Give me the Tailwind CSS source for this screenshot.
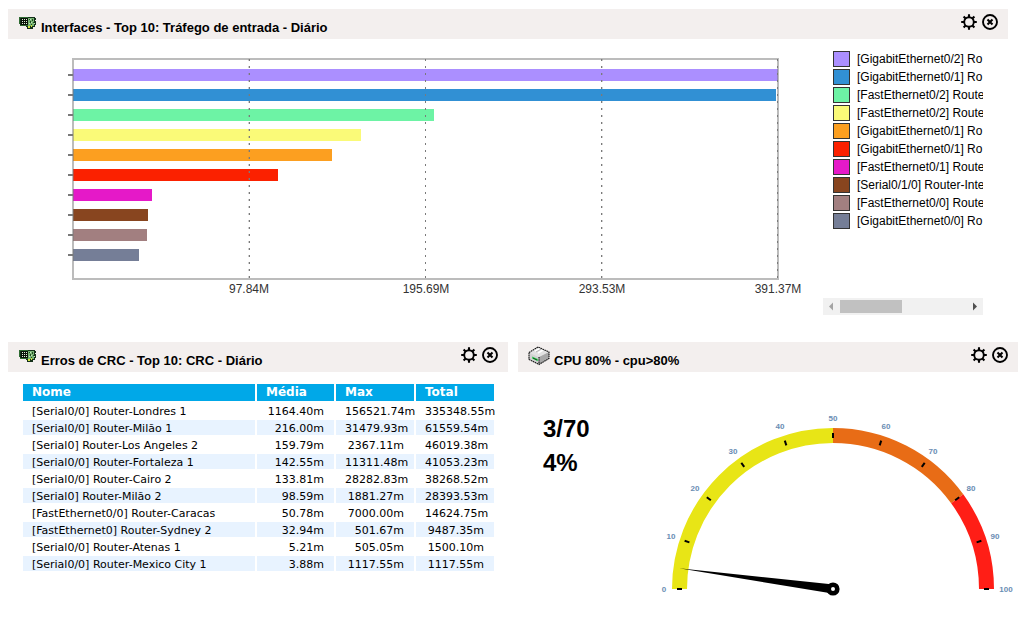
<!DOCTYPE html>
<html lang="pt-BR">
<head>
<meta charset="utf-8">
<meta name="viewport" content="width=device-width, initial-scale=1">
<title>Dashboard</title>
<script src="https://cdn.jsdelivr.net/npm/@tailwindcss/browser@4"></script>
</head>
<body class="bg-white text-black font-['Liberation_Sans',Arial,sans-serif]">
<svg class="hidden" aria-hidden="true">
  <symbol id="gear" viewBox="0 0 16 16">
    <circle cx="8" cy="8" r="4.8" fill="none" stroke="#000" stroke-width="1.9"/>
    <path d="M8 .2v3M8 12.8v3M.2 8h3M12.8 8h3M2.6 2.6l2 2M11.4 11.4l2 2M2.6 13.4l2-2M11.4 4.6l2-2" stroke="#000" stroke-width="2.1" fill="none"/>
  </symbol>
  <symbol id="close" viewBox="0 0 16 16">
    <circle cx="8" cy="8" r="7" fill="none" stroke="#000" stroke-width="1.9"/>
    <path d="M5.500 5.500l5 5M10.500 5.500l-5 5" stroke="#000" stroke-width="2.1" fill="none"/>
  </symbol>
  <symbol id="card" viewBox="0 0 18 13">
    <path d="M0 0h16v1h1v2h-1v1h1v4h-1v2h-2v2H8v-2H7V9H1V7H0z" fill="#14301a"/>
    <path d="M0 0h9v1H0zM0 1h1v6H0zM1 8h8v1H1z" fill="#2f6b33"/>
    <path d="M2 1h7v7H2z" fill="#081208"/>
    <path d="M3 2h1v1H3zM5 2h1v1H5zM7 2h1v1H7zM3 4h1v1H3zM5 4h1v1H5zM7 4h1v1H7zM3 6h1v1H3zM5 6h1v1H5zM7 6h1v1H7z" fill="#dff0d8"/>
    <path d="M9 1h6v8H9z" fill="#77b373"/>
    <path d="M10 2h1v1h-1zM13 2h1v2h-1zM11 4h1v2h-1zM14 5h1v1h-1zM12 7h1v1h-1z" fill="#1f4a22"/>
    <path d="M11 2h1v1h-1zM12 5h1v1h-1zM15 6h1v1h-1zM10 6h1v1h-1z" fill="#c2e8bb"/>
    <path d="M9 9h2v2H9zM12 8h1v2h-1z" fill="#d2e83f"/>
  </symbol>
  <symbol id="drive" viewBox="0 0 22 20">
    <path d="M1 6.500L10 1l11 5v6.500l-10 6-10-5z" fill="#efefef"/>
    <path d="M1 6.500L10 1l11 5-10 5z" fill="#e2e2e2"/>
    <path d="M11 11L21 6v6.500l-10 6z" fill="#a8a8a8"/>
    <path d="M1 6.500L11 11v7.500l-10-5z" fill="#d2d2d2"/>
    <path d="M7 5l5-2.500M10 7l5-3" stroke="#fff" stroke-width="1.500"/>
    <path d="M8 6l5-2.800" stroke="#b5b5b5" stroke-width="1"/>
    <path d="M1 6.500L10 1l11 5v6.500l-10 6-10-5zM11 11v7" fill="none" stroke="#111" stroke-width="1.100" stroke-dasharray="1.600 .6"/>
    <path d="M4 10.500l6 2.600v2.200L4 12.600z" fill="#43d263"/>
    <path d="M5 12l4 2" stroke="#064d14" stroke-width="1"/>
  </symbol>
</svg>

<main class="pl-2 pr-px pt-[9px]">
  <section class="mr-2.5">
    <header class="flex h-[30px] items-start justify-between bg-[#f3efee] px-2.5 pt-[5px]">
      <div class="flex">
        <svg class="mt-[3px] ml-px h-[13px] w-[18px]" shape-rendering="crispEdges"><use href="#card"/></svg>
        <h2 class="ml-1 mt-1.5 text-[13px] leading-4 font-bold">Interfaces - Top 10: Tráfego de entrada - Diário</h2>
      </div>
      <div class="flex gap-[5px]">
        <button type="button" aria-label="Configurar"><svg class="size-4"><use href="#gear"/></svg></button>
        <button type="button" aria-label="Fechar"><svg class="size-4"><use href="#close"/></svg></button>
      </div>
    </header>
    <div class="flex items-start pl-[52px] pr-[25px] pt-3">
      <svg class="mt-[-1px] h-auto min-w-0 flex-1" viewBox="60 50 763 250" font-size="12" fill="#333" role="img" aria-label="Tráfego de entrada por interface">
        <g shape-rendering="crispEdges">
          <rect x="73" y="69" width="705" height="12" fill="#ab8fff"/>
          <rect x="73" y="89" width="703" height="12" fill="#3190d4"/>
          <rect x="73" y="109" width="361" height="12" fill="#6df3a5"/>
          <rect x="73" y="129" width="288" height="12" fill="#fafa78"/>
          <rect x="73" y="149" width="259" height="12" fill="#fc9f20"/>
          <rect x="73" y="169" width="205" height="12" fill="#fb2100"/>
          <rect x="73" y="189" width="79" height="12" fill="#e519c8"/>
          <rect x="73" y="209" width="75" height="12" fill="#88451f"/>
          <rect x="73" y="229" width="74" height="12" fill="#a27f80"/>
          <rect x="73" y="249" width="66" height="12" fill="#757e97"/>
          <rect x="73" y="59" width="705" height="220" fill="none" stroke="#7a7a7a" stroke-opacity=".5" stroke-width="2"/>
          <path d="M68 75h5M68 95h5M68 115h5M68 135h5M68 155h5M68 175h5M68 195h5M68 215h5M68 235h5M68 255h5" stroke="#7a7a7a" stroke-width="2"/>
          <path d="M249.500 59v219M425.500 59v219M601.500 59v219M777.500 59v219" stroke="#7a7a7a" stroke-dasharray="2 5"/>
          <path d="M248.500 59v219M602.500 59v219" stroke="#7a7a7a" stroke-opacity=".35" stroke-dasharray="2 5"/>
        </g>
        <g text-anchor="middle">
          <text x="249" y="293">97.84M</text>
          <text x="426" y="293">195.69M</text>
          <text x="602" y="293">293.53M</text>
          <text x="778" y="293">391.37M</text>
        </g>
      </svg>
      <div class="w-40 shrink-0">
        <ul class="flex h-[247px] flex-col gap-0.5 overflow-hidden pl-2.5 text-xs leading-4 whitespace-nowrap">
          <li class="flex gap-[7px]"><span class="h-4 w-[17px] shrink-0 border border-[#333] bg-[#ab8fff]"></span>[GigabitEthernet0/2] Ro</li>
          <li class="flex gap-[7px]"><span class="h-4 w-[17px] shrink-0 border border-[#333] bg-[#3190d4]"></span>[GigabitEthernet0/1] Ro</li>
          <li class="flex gap-[7px]"><span class="h-4 w-[17px] shrink-0 border border-[#333] bg-[#6df3a5]"></span>[FastEthernet0/2] Route</li>
          <li class="flex gap-[7px]"><span class="h-4 w-[17px] shrink-0 border border-[#333] bg-[#fafa78]"></span>[FastEthernet0/2] Route</li>
          <li class="flex gap-[7px]"><span class="h-4 w-[17px] shrink-0 border border-[#333] bg-[#fc9f20]"></span>[GigabitEthernet0/1] Ro</li>
          <li class="flex gap-[7px]"><span class="h-4 w-[17px] shrink-0 border border-[#333] bg-[#fb2100]"></span>[GigabitEthernet0/1] Ro</li>
          <li class="flex gap-[7px]"><span class="h-4 w-[17px] shrink-0 border border-[#333] bg-[#e519c8]"></span>[FastEthernet0/1] Route</li>
          <li class="flex gap-[7px]"><span class="h-4 w-[17px] shrink-0 border border-[#333] bg-[#88451f]"></span>[Serial0/1/0] Router-Inte</li>
          <li class="flex gap-[7px]"><span class="h-4 w-[17px] shrink-0 border border-[#333] bg-[#a27f80]"></span>[FastEthernet0/0] Route</li>
          <li class="flex gap-[7px]"><span class="h-4 w-[17px] shrink-0 border border-[#333] bg-[#757e97]"></span>[GigabitEthernet0/0] Ro</li>
        </ul>
        <div class="flex h-[17px] items-center bg-[#f1f1f1]">
          <button type="button" aria-label="Rolar à esquerda" class="size-[17px]"><svg class="size-[17px]" viewBox="0 0 17 17"><path d="M10 4.500v8L6 8.500z" fill="#a3a3a3"/></svg></button>
          <div class="flex-1"><div class="h-[13px] w-[62px] bg-[#c1c1c1]"></div></div>
          <button type="button" aria-label="Rolar à direita" class="size-[17px]"><svg class="size-[17px]" viewBox="0 0 17 17"><path d="M7 4.500v8l4-4z" fill="#505050"/></svg></button>
        </div>
      </div>
    </div>
  </section>

  <div class="mt-[27px] grid grid-cols-2 gap-2.5">
    <section class="min-w-0">
      <header class="flex h-[30px] items-start justify-between bg-[#f3efee] px-2.5 pt-[5px]">
        <div class="flex">
          <svg class="mt-[3px] ml-px h-[13px] w-[18px]" shape-rendering="crispEdges"><use href="#card"/></svg>
          <h2 class="ml-1 mt-1.5 text-[13px] leading-4 font-bold">Erros de CRC - Top 10: CRC - Diário</h2>
        </div>
        <div class="flex gap-[5px]">
          <button type="button" aria-label="Configurar"><svg class="size-4"><use href="#gear"/></svg></button>
          <button type="button" aria-label="Fechar"><svg class="size-4"><use href="#close"/></svg></button>
        </div>
      </header>
      <div class="pt-2.5 pl-[13px] pr-3">
        <table class="w-full table-fixed border-separate border-spacing-0.5 text-[11px] leading-[13px] whitespace-nowrap font-['Verdana','DejaVu_Sans',sans-serif] [&_td]:px-[9px] [&_td]:pt-0.5 [&_td]:pb-0 [&_td:not(:first-child)]:pr-2.5 [&_td:not(:first-child)]:text-right [&_th]:px-[9px] [&_th]:py-0 [&_th]:text-left [&_tbody_tr:nth-child(even)_td]:bg-[#e8f3ff]">
          <colgroup><col><col class="w-[77px]"><col class="w-[78px]"><col class="w-[78px]"></colgroup>
          <thead><tr class="text-xs leading-[17px] font-bold text-white [&_th]:bg-[#00a8e8]"><th>Nome</th><th>Média</th><th>Max</th><th>Total</th></tr></thead>
          <tbody>
            <tr><td>[Serial0/0] Router-Londres 1</td><td>1164.40m</td><td>156521.74m</td><td>335348.55m</td></tr>
            <tr><td>[Serial0/0] Router-Milão 1</td><td>216.00m</td><td>31479.93m</td><td>61559.54m</td></tr>
            <tr><td>[Serial0] Router-Los Angeles 2</td><td>159.79m</td><td>2367.11m</td><td>46019.38m</td></tr>
            <tr><td>[Serial0/0] Router-Fortaleza 1</td><td>142.55m</td><td>11311.48m</td><td>41053.23m</td></tr>
            <tr><td>[Serial0/0] Router-Cairo 2</td><td>133.81m</td><td>28282.83m</td><td>38268.52m</td></tr>
            <tr><td>[Serial0] Router-Milão 2</td><td>98.59m</td><td>1881.27m</td><td>28393.53m</td></tr>
            <tr><td>[FastEthernet0/0] Router-Caracas</td><td>50.78m</td><td>7000.00m</td><td>14624.75m</td></tr>
            <tr><td>[FastEthernet0] Router-Sydney 2</td><td>32.94m</td><td>501.67m</td><td>9487.35m</td></tr>
            <tr><td>[Serial0/0] Router-Atenas 1</td><td>5.21m</td><td>505.05m</td><td>1500.10m</td></tr>
            <tr><td>[Serial0/0] Router-Mexico City 1</td><td>3.88m</td><td>1117.55m</td><td>1117.55m</td></tr>
          </tbody>
        </table>
      </div>
    </section>

    <section class="min-w-0">
      <header class="flex h-[30px] items-start justify-between bg-[#f3efee] px-2.5 pt-[5px]">
        <div class="flex">
          <svg class="-mt-px h-5 w-[22px]"><use href="#drive"/></svg>
          <h2 class="ml-1 mt-1.5 text-[13px] leading-4 font-bold">CPU 80% - cpu&gt;80%</h2>
        </div>
        <div class="flex gap-[5px]">
          <button type="button" aria-label="Configurar"><svg class="size-4"><use href="#gear"/></svg></button>
          <button type="button" aria-label="Fechar"><svg class="size-4"><use href="#close"/></svg></button>
        </div>
      </header>
      <div class="flex items-start pl-[25px]">
        <div class="w-[107px] shrink-0 pt-10 text-2xl leading-[34px] font-bold">
          <p>3/70</p>
          <p>4%</p>
        </div>
        <svg class="mt-[38px] h-auto min-w-0 flex-1" viewBox="650 410 368 190" role="img" aria-label="Uso de CPU">
          <g fill="none" stroke-width="15">
            <path d="M679.500 589A153.500 153.500 0 0 1 833 435.500" stroke="#e8e516"/>
            <path d="M833 435.500A153.500 153.500 0 0 1 957.180 498.770" stroke="#e86c16"/>
            <path d="M957.180 498.770A153.500 153.500 0 0 1 986.500 589" stroke="#ff1e16"/>
          </g>
          <g stroke="#000" stroke-width="2">
            <path d="M677 589h5" id="tick"/>
            <use href="#tick" transform="rotate(18 833 589)"/>
            <use href="#tick" transform="rotate(36 833 589)"/>
            <use href="#tick" transform="rotate(54 833 589)"/>
            <use href="#tick" transform="rotate(72 833 589)"/>
            <use href="#tick" transform="rotate(90 833 589)"/>
            <use href="#tick" transform="rotate(108 833 589)"/>
            <use href="#tick" transform="rotate(126 833 589)"/>
            <use href="#tick" transform="rotate(144 833 589)"/>
            <use href="#tick" transform="rotate(162 833 589)"/>
            <use href="#tick" transform="rotate(180 833 589)"/>
          </g>
          <path d="M679 568.300L833.600 584.500L832.400 593.500z" fill="#000"/>
          <circle cx="833" cy="589" r="4.300" fill="#fff" stroke="#000" stroke-width="4.600"/>
          <g font-size="8" font-weight="bold" fill="#6a8db3" text-anchor="middle">
            <text x="664" y="592">0</text>
            <text x="671" y="539">10</text>
            <text x="695" y="491">20</text>
            <text x="733" y="454">30</text>
            <text x="780" y="429">40</text>
            <text x="833" y="421">50</text>
            <text x="886" y="429">60</text>
            <text x="933" y="454">70</text>
            <text x="971" y="491">80</text>
            <text x="995" y="539">90</text>
            <text x="1006" y="592">100</text>
          </g>
        </svg>
      </div>
    </section>
  </div>
</main>
</body>
</html>
